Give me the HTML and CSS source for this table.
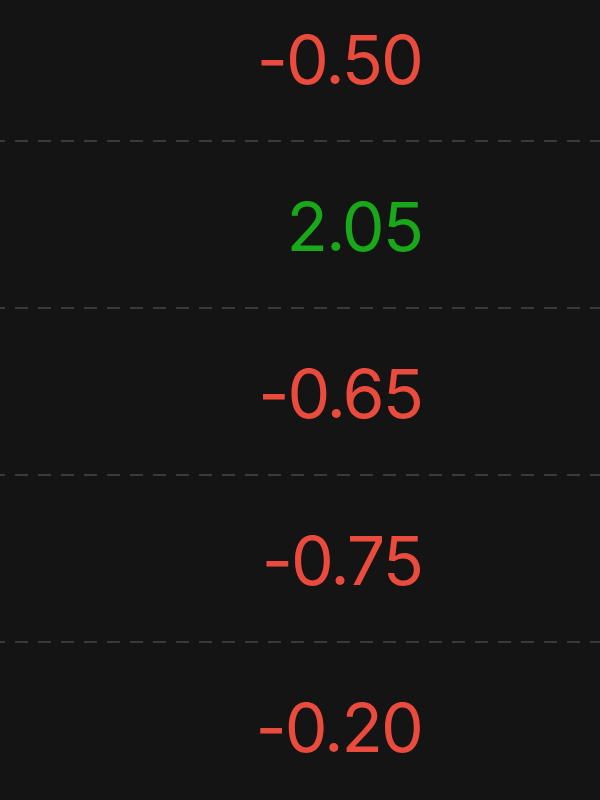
FILE: index.html
```html
<!DOCTYPE html>
<html lang="en">
<head>
    <meta charset="UTF-8">
    <meta name="viewport" content="width=device-width, initial-scale=1.0">
    <title>Change</title>
    <link rel="stylesheet" href="styles.css">
</head>
<body>
    <!-- Columna de cambios -->
    <div class="change-list">
        <div class="change-row down">-0.50</div>
        <div class="change-row up">2.05</div>
        <div class="change-row down">-0.65</div>
        <div class="change-row down">-0.75</div>
        <div class="change-row down">-0.20</div>
    </div>
</body>
</html>
```

FILE: styles.css
```css
:root {
    --bg-color: #141414;
    --red: #ea4b3c;
    --green: #18a818;
    --line-color: #3a3a3a;
}

* {
    box-sizing: border-box;
    margin: 0;
    padding: 0;
}

body {
    background-color: var(--bg-color);
    font-family: Inter, 'Liberation Sans', sans-serif;
    overflow: hidden;
}

.change-list {
    margin-top: -25px;
}

.change-row {
    height: 167px;
    display: flex;
    align-items: center;
    justify-content: flex-end;
    padding-right: 178px;
    font-size: 68px;
    letter-spacing: -2px;
    background-image: linear-gradient(to right, var(--line-color) 13px, transparent 13px);
    background-size: 23px 2px;
    background-repeat: repeat-x;
    background-position: -8px bottom;
}

.change-row.down {
    color: var(--red);
}

.change-row.up {
    color: var(--green);
}
```
